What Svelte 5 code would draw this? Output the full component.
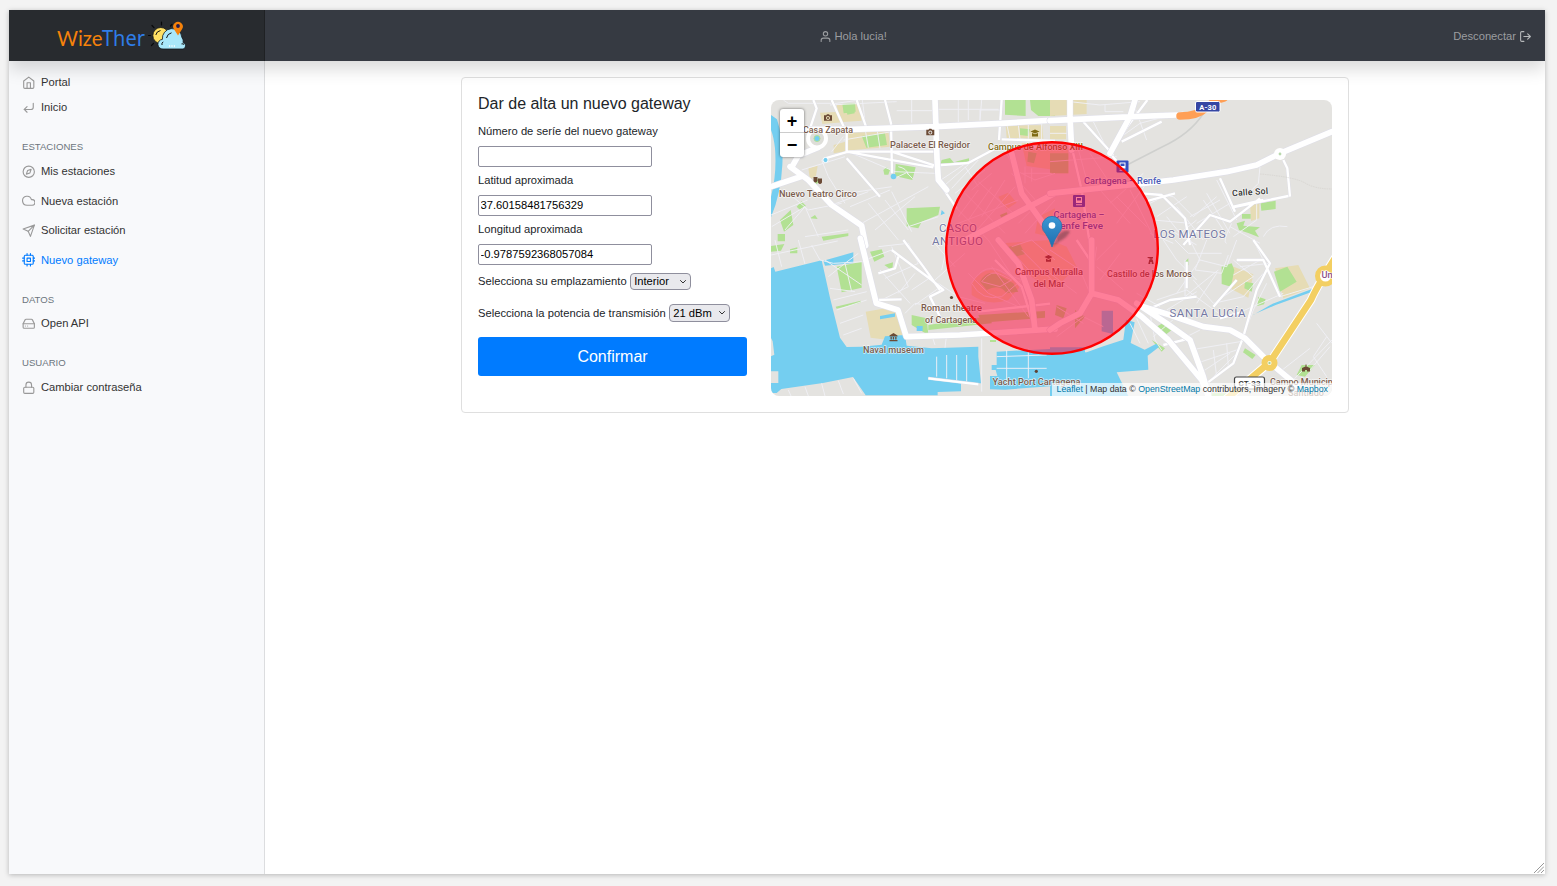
<script>
  const icons = {
    home: '<path d="M3 9l9-7 9 7v11a2 2 0 0 1-2 2H5a2 2 0 0 1-2-2z"/><path d="M9 22V12h6v10"/>',
    enter: '<path d="M9 10l-5 5 5 5"/><path d="M20 4v7a4 4 0 0 1-4 4H4"/>',
    compass: '<circle cx="12" cy="12" r="10"/><path d="M16.24 7.76l-2.12 6.36-6.36 2.12 2.12-6.36z"/>',
    cloud: '<path d="M18 10h-1.26A8 8 0 1 0 9 20h9a5 5 0 0 0 0-10z"/>',
    send: '<path d="M22 2L11 13"/><path d="M22 2l-7 20-4-9-9-4z"/>',
    cpu: '<rect x="4" y="4" width="16" height="16" rx="2"/><path d="M9 9h6v6H9zM9 1v3M15 1v3M9 20v3M15 20v3M20 9h3M20 14h3M1 9h3M1 14h3"/>',
    drive: '<path d="M22 12H2"/><path d="M5.45 5.11L2 12v6a2 2 0 0 0 2 2h16a2 2 0 0 0 2-2v-6l-3.45-6.89A2 2 0 0 0 16.76 4H7.24a2 2 0 0 0-1.79 1.11z"/><path d="M6 16h.01M10 16h.01"/>',
    lock: '<rect x="3" y="11" width="18" height="11" rx="2"/><path d="M7 11V7a5 5 0 0 1 10 0v4"/>',
    user: '<path d="M20 21v-2a4 4 0 0 0-4-4H8a4 4 0 0 0-4 4v2"/><circle cx="12" cy="7" r="4"/>',
    logout: '<path d="M9 21H5a2 2 0 0 1-2-2V5a2 2 0 0 1 2-2h4"/><path d="M16 17l5-5-5-5M21 12H9"/>'
  };

  const sections = [
    { items: [['home', 'Portal'], ['enter', 'Inicio']] },
    {
      title: 'ESTACIONES',
      items: [['compass', 'Mis estaciones'], ['cloud', 'Nueva estación'], ['send', 'Solicitar estación'], ['cpu', 'Nuevo gateway']]
    },
    { title: 'DATOS', items: [['drive', 'Open API']] },
    { title: 'USUARIO', items: [['lock', 'Cambiar contraseña']] }
  ];
  const active = 'Nuevo gateway';

  let serial = $state('');
  let lat = $state('37.60158481756329');
  let lon = $state('-0.9787592368057084');

  // The map is drawn as four tiles, each with its own origin and three units per pixel.
  const tiles = [
    {
      x: 765, y: 90,
      water: 'M18 75L36 88Q56 150 52 225Q48 310 18 382V320Q36 250 30 175Q26 140 18 120Z M530 360l10 10-13 6z',
      tan: 'M215 45l70-5 5 52-65 5z M165 68l62-3 5 32-60 5z M240 127l130-5 6 48-110 10-60 10v-25l35-10z M722 106h110l3 40H725z M130 235l28-8-5 30-18 12z M770 160h100v80l-85-12z M700 320l30-12 25 30-30 20z M820 380l50-25v90l-60-15z',
      park: 'M232 42l38-3 2 26-36 5z M290 138l70-8 6 35-62 8z M720 30h62v48l-62-4z M795 30h75v48h-50l-22-18z M392 222l60 10-10 38-52-12z M355 240l10-8 10 8-5 14h-12z M530 210l25-6 12 14-40 2z M570 215l42-10v14z M425 355l100-5-5 25-50 20-10 20-35-6z M45 390l32-30 8 45-28 20z M95 350l14-16 14 14-18 12z M135 385l15-10 8 12z M765 115l30 3-5 20-25-3z M170 440l80-10v8l-75 14z M38 432h22v22H38z M245 60l24-4v14l-22 4z M160 265l-14 14 9 4 12-14z M790 185l25 5-8 30-20-5z M705 375l20-8 10 20-20 8z',
      minor: 'M70 40H200 M70 40L55 30 M195 45l200-10 M300 95l-8-65 M285 30l-85 12 M440 30v68 M395 62h110 M580 30v68 M510 58h190 M610 30v60 M650 30l-5 60 M645 92V60h60 M725 100l10 48 M760 105l5 42 M790 105v45 M830 100v50 M300 115l10 58 M335 110l10 65 M235 150l145-25 M200 185l35-45 M250 185l140 60 120 5 M250 205l95 115 M240 200L110 240 M170 210l20 50 50 80 M180 320l200-30 M200 345l110-40 M255 350l120-50 M290 400l200-110 M330 420l120-100 M360 330l70 90 M310 340l90 110 M380 305l60 120 M430 410l90-30 M520 275l90-60 M540 285l80-70 M560 295l80-85 M570 310l90-70 M600 230l40 60 M620 300l60-50 M60 300l70 60 100-20 M18 375l110-45 M20 410l100-60 40 90 M120 350l-60 70 M120 440l130-20 M395 262l30-14 18 18 M400 230q25 5 30 24 M640 275l110 100 M600 310l120 120 M560 340l110 110 M580 400l180-70 M640 300l-60 80 M680 290l-70 100 M720 270l-70 110 M610 450l140-160 M740 250l80 90 M760 400l80-80 M870 330l-90 100 M720 180l30 60 60 30 60-20 M770 250h90 M780 230v50 M800 235v40',
      mid: 'M200 30l45 100v60 M145 30l10 25-20 60 M275 30l28 80 M360 30l18 70 3 150 M180 205l70-20h130l130 42 100-8 90-48h170 M245 185l145 27 115 20 M710 30l-8 120 M520 275l55 80 M710 148l160 5 M245 205l100 115 M380 185h130',
      major: 'M110 118h150l250-8 200-10 160-10 M510 30l6 175 4 65 25 30 M75 230l55 40 70 75 90 62 12 60 M80 232l20-35 60-25 M18 290l95-32 M740 190l30 120 100 140 M870 310l-270 140'
    },
    {
      x: 765, y: 240,
      water: 'M18 85l8-4 5 14 24-6 115-28 5 22 20 90 30 120 20 28 45-1 60-6 10-25 60-4 5 32 75 8 140-5v30l8 80-60-1v25l-70 2v10H302l-38-55-90 18-125 18-14 12H18v-30h22v-35H18v-45l10-5-5-40-5-10z M175 62l90-25v32l-85 8z M695 335l160-8v112l-135 10-45-1v-40h22l-5-18h-12v-15h15z M345 228l45-8v10l-45 8z M455 258h18v15h-18z',
      tan: 'M302 215l60-10 40 8 15 70-65 15-35-5z M345 235l55-10 15 60-55 12z M710 10l145-10v150l-70-50z M620 130q40-60 90-30l60 35-40 45q-60 20-110-15z',
      park: 'M215 80l75-15v78l-60 14z M315 35l35-7 8 22-30 15z M358 75l26-8-2 25z M18 18l40-6-10 20-30 3z M75 28l22-6v18H75z M440 225l45 10 5 50-50-30z M490 255l130-20 60-5v20l-190 20z M212 200l75-18v6l-72 18z M675 300h18v6h-18z M645 125q20-38 55-20l45 25 15 25-35 5q-20-30-60-10z M640 225l200-12v20l-190 15z M730 20l35-8 15 30-35 10z',
      minor: 'M30 0l20 80 M100 0l20 72 M18 45l200-42 M140 15l25 45 40 10 90-5 M180 60l110 75 M190 110l50-40 40-30 M195 145l75 10 M205 180l100-25 M215 210l90-30 M225 250l70-25 M235 285l55-20 M240 70l20 85 M300 60l80-30 M340 20l90-10 30 60-100 45 M380 20l50 120-80 40 M345 90l90 100 M400 160l50-60 M440 150l60-40 M450 195l70-50 M420 220l30-30 90 15 M520 130l60 40 80 20 M500 0l70 80 M550 0l-20 90 M600 40l-90 80 M610 100l60 60 90 40 M680 80l110 150 M620 130q40-70 100-30l50 20-60 50q-60 15-90-40 M650 125q30-40 60-20l30 15-35 20z M670 0l120 180 M740 20l60-20 70 60 M800 100l-90-100 M870 130l-100-100 M500 285l10 30 M545 283l-5 40 M265 415l25 45 M220 422l15 40 M170 430l10 38 M120 440l10 28 M70 450l8 18 M515 350v60 M545 345v70 M575 345v80 M605 345v80 M650 295v160 M725 330v100 M790 325v90 M695 385h150 M695 350l150-5',
      mid: 'M380 30l120 90 35 30-40 20 30 60 M330 180l80-2 M340 100l50-15 10-35 M415 0l60 80 50 70 M690 60l80 80 40 130 M640 215l215-24 M490 415l150 18',
      major: 'M286 -5l48 195 65 20 25 80 160-5 100-6 186-12 M700 0l60 70 40 110 10 90'
    },
    {
      x: 1050, y: 90,
      water: '',
      tan: 'M0 30h110v42L0 78z M0 108h48v40H0z M600 340l28-5v50l-25 8z M0 160l55 10v80H0z',
      park: 'M632 340l45-8v25l-43 5z M576 372h26v14h-26z M560 400l25-8-5 15 50 5-15 10 12 20-30-12-30-10z M0 190h55v60H0z',
      minor: 'M60 35l90 10 120-10 M130 95l45 90 M250 40l40 110 M200 150l70-50 130-35 M165 45v20h55 M0 130h50 M0 215l200-15 M80 160l30 110 M120 190l60 90 M150 300l90 100 M180 340l100-90 M200 400l90-120 M240 300l80 160 M200 320l90 90 M290 310l80 10 60 60 70-60 M300 340l60-30 M320 380l90-60 M380 350l80 100 M420 380l90-50 M440 400l100-60 M470 310l70 120 M500 270l60 120 M460 330l60 90 M550 355l80-25 90-12 M630 230l-5 50-30 30 M545 400q-30 60-15 60 M620 340v50l-70 50 M640 440q20-40 72-30 M540 410l90 50 M300 430l70 30 M360 420l80 45 M310 390l110 10 M350 380l40 50 50-40',
      mid: 'M55 30l10 140 30 130 25 165 M100 95l90 100 M292 30l-60 80-50 80 M215 155l120-60 M180 190l60 70 M275 310l60 5 70 70 15 80 M285 335l90-25 M510 265l45 100 M550 350l90-20 M715 318l-170 35 M700 210l12 25 8 85 M400 465l80-90 60 20 90-70',
      major: 'M0 92l250-12 130-5 M255 30l-15 50-60 110 M0 310l280-30 90-10 160-25 90-20 70-35 156-65 M60 75v-45 M60 80l5 100'
    },
    {
      x: 1050, y: 240,
      water: 'M0 327l110 10 50-18 60-20 8-60 26 8-12 62 42 20 35-18 8 10-34 26 2 42-95 8 35 71H0z M155 212h34v70l-34-8z M0 322h105v16H0z M608 226l60-35 124-46-5 10-110 40-65 28z',
      tan: 'M545 78l65 25-15 70-50-25z M675 85l70-10 35 70-80 30z M560 440l40-12-15 25-40 20-20-3z M0 0l50 20 30 60-60 60-20 5z',
      park: 'M515 80l30-10 8 20-10 50-28-8z M672 95l40-15 28 45-50 30z M585 125l25 5-5 25-22-10z M405 65l10-10v20l-10 15z M320 260l25-15 20 25-28 22-18-10z M585 325l32 20-10 12-28-20z M625 170l22 8-5 15-20 5z M755 375l40 0-30 35-25-5z M480 460h60v8h-60z M305 300l40 25-10 10z M20 195l30 10-10 30-25-10z M75 210l30 20-30 35z',
      minor: 'M340 0l40 60 60 60 M375 0l40 40 100 0 M420 0l30 60-70 100 M450 60l80 20 30-80 M470 0l-35 90 80 10 20-55 M405 60v110l100-80 M500 100l-60 90 M320 180l90-30 110 80 M350 210l90-55 M430 120l60 70 90-20 60-70 M610 0l80 160 M570 80l90-10 M690 170l100-30 M550 60l60 50-90 60 M640 55l-90 50 M580 290l30-80 40-80 M240 250l30 60 M260 235l35 75 M300 220l15 80 20 30 M260 160l70 40 M380 230l-70 60 M450 270l-60 30 M420 330l150-25 M440 370l120-40 M450 400l90-60 M470 430l90-90 M490 330l10 80 M530 310l5 70 M690 395l90-70 M720 430l126-130 M790 350l40 60 M840 320l-60 70 M800 250l46 60 M830 290l-40 60 M0 30l90 60 30 70 M140 20l-20 140 M140 80l80 70 M0 100l80 60 M20 200l80 50 M200 0l-60 60 M150 120l60-80 M20 290l80-60 60 30 M540 230l160-70',
      mid: 'M300 205l60-25 80-10 M580 290l40-140 40-80-50-70 M490 200l70-80 M580 290l-30 80-80 60 M420 300l50 130 M410 65v80 M510 235l70-20 M340 315l80-20 M560 60h80l50 110 M80 0l40 60 10 100',
      major: 'M125 160l80 20 70 50 80 70 100 120 20 48 M260 190l90 60 70 50 40 110 15 55 M280 200l80 25 100 35 80 10 45 25 75 75 M680 385l60 50 M125 160L90 220 30 250 0 270 M125 160V0'
    }
  ];

  const labels = [
    ['Casa Zapata', 828, 132.5, 50, 'poi'],
    ['Palacete El Regidor', 930, 148, 80, 'poi'],
    ['Campus de Alfonso XIII', 1035.5, 149.5, 95, 'school'],
    ['Nuevo Teatro Circo', 818, 196.5, 78, 'poi'],
    ['CASCO', 958, 231.8, 38, 'area'],
    ['ANTIGUO', 957.5, 244.8, 51, 'area'],
    ['Cartagena – Renfe', 1122.5, 183.8, 77, 'rail'],
    ['Cartagena –', 1079, 217.5, 51, 'rail'],
    ['Renfe Feve', 1078.5, 229.2, 49, 'rail'],
    ['Campus Muralla', 1049, 275, 68, 'poi'],
    ['del Mar', 1049, 286.5, 31, 'poi'],
    ['Castillo de los Moros', 1149.5, 276.5, 85, 'poi'],
    ['LOS MATEOS', 1189.5, 238.3, 72, 'area'],
    ['SANTA LUCÍA', 1207.5, 317.3, 76, 'area'],
    ['Roman theatre', 951.5, 311, 61, 'poi'],
    ['of Cartagena', 951, 322.7, 52, 'poi'],
    ['Naval museum', 893.5, 353.2, 61, 'poi'],
    ['Yacht Port Cartagena', 1036.5, 384.7, 88, 'poi'],
    ['Univ', 1330.5, 277.5, 18, 'hosp'],
    ['Campo Municipal', 1305, 384.7, 70, 'poi'],
    ['Santiago', 1306, 396, 36, 'poi']
  ];
  const dots = [[951.5, 297.5], [1036.3, 371.3]];
</script>

{#snippet icon(name)}
  <svg class="icon" viewBox="0 0 24 24" aria-hidden="true">{@html icons[name]}</svg>
{/snippet}

{#snippet camera(x, y)}
  <path transform="translate({x} {y})" fill="#6b4a35" fill-rule="evenodd" d="M-4-2.3h2.2L-1-3.3h2l.8 1H4v5.6h-8zM0-1.5a2 2 0 1 0 .01 0zM0-.5a1 1 0 1 1-.01 0z" />
{/snippet}

<div class="window">
  <header>
    <div class="brand">
      <svg width="132" height="32" viewBox="56 20 132 32" role="img" aria-label="WizeTher">
        <text x="57" y="46" class="wize" textLength="45.5" lengthAdjust="spacingAndGlyphs">Wize</text>
        <text x="102" y="46" class="ther" textLength="43" lengthAdjust="spacingAndGlyphs">Ther</text>
        <g stroke="#08090a" stroke-width="1.2" stroke-linecap="round">
          <path d="M161.5 22v3M152 25.5l2 2.2M148.5 35.500h2M151.500 45.500l2-2.200M170.500 26l1.500-1.700" />
        </g>
        <circle cx="160.800" cy="35.500" r="8" fill="#ffe063" stroke="#111" stroke-width=".8" />
        <path d="M155.800 35q.7-3.700 4.700-4.500" fill="none" stroke="#111" />
        <path d="M163 49a4.800 4.800 0 0 1-.6-9.600 9.500 9.500 0 0 1 19.500-2q2 2.500 1.200 5.200a3.300 3.300 0 0 1 0 6.400z" fill="#a9e7fa" stroke="#101820" stroke-width=".8" />
        <path d="M166.500 38q.8-4.200 5-5.200M162 45q-.6-2 1.200-3.200M184 44.500q-.8-1-2.500-.6" fill="none" stroke="#111" />
        <path d="M169 46h1.200m1.200 0h1.200m1.200 0h1.200" stroke="#fff" stroke-width="1.300" />
        <path d="M178 35.500l-4-6.200a4.800 4.800 0 1 1 8 0z" fill="#f5820b" />
        <circle cx="178" cy="26" r="1.900" fill="#241a4d" />
      </svg>
    </div>
    <div class="greeting">{@render icon('user')}<span>Hola lucia!</span></div>
    <div class="logout"><span>Desconectar</span>{@render icon('logout')}</div>
  </header>

  <div class="body">
    <nav>
      {#each sections as section}
        {#if section.title}<h6>{section.title}</h6>{/if}
        <ul class:top={!section.title}>
          {#each section.items as [glyph, label]}
            <li class:active={label === active}>{@render icon(glyph)}<span>{label}</span></li>
          {/each}
        </ul>
      {/each}
    </nav>

    <main>
      <section class="card">
        <form>
          <h1>Dar de alta un nuevo gateway</h1>
          <label for="serial">Número de seríe del nuevo gateway</label>
          <input id="serial" bind:value={serial} />
          <label for="lat">Latitud aproximada</label>
          <input id="lat" bind:value={lat} />
          <label for="lon">Longitud aproximada</label>
          <input id="lon" bind:value={lon} />
          <div class="row first">
            <span>Selecciona su emplazamiento</span>
            <div class="select">
              <select aria-label="Emplazamiento"><option>Interior</option></select>
              <svg viewBox="0 0 8 6"><path d="M1.2 1.2L4 4l2.8-2.8" /></svg>
            </div>
          </div>
          <div class="row second">
            <span>Selecciona la potencia de transmisión</span>
            <div class="select">
              <select aria-label="Potencia"><option>21 dBm</option></select>
              <svg viewBox="0 0 8 6"><path d="M1.2 1.2L4 4l2.8-2.8" /></svg>
            </div>
          </div>
          <button type="button">Confirmar</button>
        </form>

        <div class="map">
          <svg class="canvas" viewBox="771 100 561 296">
            <rect x="771" y="100" width="561" height="296" fill="#e4e3e0" />
            {#each tiles as t}
              <g transform="translate({t.x} {t.y}) scale(.33333)">
                <path d={t.tan} fill="#e6dcb5" />
                <path d={t.park} fill="#b2e193" />
                <path d={t.water} fill="#74cef0" />
              </g>
            {/each}
            {#each tiles as t}
              <g transform="translate({t.x} {t.y}) scale(.33333)" fill="none" stroke-linejoin="round">
                <path d={t.minor} stroke="#f0f0f5" stroke-width="2.800" />
                <path d={t.mid} stroke="#dcdce6" stroke-width="9" />
                <path d={t.mid} stroke="#fff" stroke-width="7" />
              </g>
            {/each}
            {#each tiles as t}
              <g transform="translate({t.x} {t.y}) scale(.33333)" fill="none" stroke-linejoin="round" stroke-linecap="round">
                <path d={t.major} stroke="#dedee8" stroke-width="20" />
                <path d={t.major} stroke="#fff" stroke-width="17" />
              </g>
            {/each}

            <circle cx="817" cy="138.500" r="9" fill="#deded9" stroke="#fff" stroke-width="4" />
            <circle cx="817" cy="138.500" r="3" fill="#74cef0" stroke="#b2e193" />
            <circle cx="825.500" cy="160" r="2.600" fill="#74cef0" stroke="#fff" />
            <circle cx="893.500" cy="176.500" r="2.800" fill="#74cef0" />
            <circle cx="1280" cy="154" r="6" fill="#fff" />
            <circle cx="1280" cy="154" r="1.400" fill="#b9d9ad" />
            <path d="M1127 165L1162 147Q1190 134 1203 114" fill="none" stroke="#cfd0ce" stroke-width="1.500" />
            <path d="M1260 174q35 3 45 9t27 6" fill="none" stroke="#d5d3cf" stroke-width=".7" stroke-dasharray="1.500 .8" />
            <path d="M1180 116Q1198 116 1206 108T1224 98" fill="none" stroke="#ff9f55" stroke-width="7.500" stroke-linecap="round" />
            <g fill="none" stroke-linecap="round">
              <path d="M1224 401L1270 362L1311 300Q1316 288 1335 258" stroke="#fff" stroke-width="8.500" />
              <path d="M1224 401L1270 362L1311 300Q1316 288 1335 258" stroke="#f3cf62" stroke-width="6.500" />
            </g>
            <circle cx="1325.500" cy="276" r="8" fill="#fff" stroke="#f3cf62" stroke-width="5" />
            <circle cx="1269.500" cy="363" r="5" fill="#fff" stroke="#f3cf62" stroke-width="6" />
            <circle cx="1269.500" cy="363" r="1.200" fill="#a7cf91" />

            <rect x="1195.500" y="101.500" width="24.500" height="10.500" rx="1.500" fill="#3546a3" stroke="#fff" />
            <text x="1207.800" y="109.500" class="shield" textLength="17">A-30</text>
            <rect x="1234.500" y="377" width="30" height="12" rx="2" fill="#fff" stroke="#444" stroke-width="1.200" />
            <text x="1249.500" y="385.500" class="shield dark" textLength="22">CT-33</text>

            {@render camera(828, 117.5)}
            {@render camera(930.3, 132)}
            <g fill="#6b4a35">
              <path d="M813.5 177h4v4q-2 3-4 0zM818 178.5h4v4q-2 3-4 0z" />
              <path d="M889.5 335.5l4-2.5 4 2.5v1h-8zM890.5 337h1.3v2.5h-1.3zM892.8 337h1.3v2.5h-1.3zM895.2 337h1.3v2.5h-1.3zM889.5 340h8v1.3h-8z" />
              <path d="M1147 257h6v1.500h-1.300v1h1l1 4.500h-2v-2h-1.400v2h-2l1-4.500h1v-1h-1.300z" />
              <path d="M1044.500 257l4-2 4 2-4 2zM1046 258.800l2.500 1.200 2.500-1.200v3h-5z" />
              <path d="M1302 368l3.500-1.500v-2h1v2l3.500 1.500v3.500h-3v-1.500h-2v1.500h-3z" />
            </g>
            <path fill="#7f6b14" d="M1030.500 131.500l4.500-2 4.500 2-4.500 2zM1032 133l3 1.300 3-1.300v3.500h-6z" />
            {#each [[1116.5, 160.5], [1073, 195]] as [x, y]}
              <g transform="translate({x} {y})">
                <rect width="12" height="12" rx="1" fill="#3450c0" />
                <path fill="#fff" fill-rule="evenodd" d="M3 2h6v6H3zm1 1v2.500h4V3zM3 9.200h6v1H3z" />
              </g>
            {/each}
            {#each dots as [x, y]}<circle cx={x} cy={y} r="1.600" fill="#5f4334" />{/each}

            {#each labels as [text, x, y, w, kind]}
              <text {x} {y} class={kind} textLength={w} lengthAdjust={kind === 'area' ? 'spacing' : 'spacingAndGlyphs'}>{text}</text>
            {/each}
            <text x="1250" y="195" class="street" textLength="36" transform="rotate(-4 1250 192)">Calle Sol</text>

            <circle cx="1052" cy="248" r="105.800" fill="#ff0033" fill-opacity=".5" stroke="#f00" stroke-width="2.400" />

            <defs>
              <linearGradient id="pin" x1="0" y1="0" x2="0" y2="1">
                <stop offset="0" stop-color="#3a97d3" />
                <stop offset="1" stop-color="#1f6fb0" />
              </linearGradient>
              <filter id="soft"><feGaussianBlur stdDeviation="1.200" /></filter>
            </defs>
            <path d="M1052 247l6-12q6-6 12-4-2 6-10 10z" fill="#222" opacity=".35" filter="url(#soft)" />
            <path d="M1052 247.500q-2-7-6.500-13.500a9.800 9.800 0 1 1 13 0q-4.500 6.500-6.500 13.500z" transform="translate(0 -.5)" fill="url(#pin)" stroke="#2a73ad" stroke-width=".8" />
            <circle cx="1052" cy="225.500" r="3.300" fill="#fff" />
          </svg>
          <div class="zoom"><span>+</span><span>−</span></div>
          <div class="credit"><a>Leaflet</a> | Map data © <a>OpenStreetMap</a> contributors, Imagery © <a>Mapbox</a></div>
        </div>
      </section>
    </main>
  </div>
  <svg class="grip" viewBox="0 0 10 10"><path d="M0 10L10 0M3.500 10L10 3.500M7 10l3-3" /></svg>
</div>

<style>
  :global(body) { background: #f3f3f3; }
  :global(#app) { display: flow-root; height: 886px; overflow: hidden; }
  :global(*) { box-sizing: border-box; }
  .window {
    position: relative;
    display: flex;
    flex-direction: column;
    width: 1536px;
    height: 864px;
    margin: 10px 0 0 9px;
    background: #fff;
    box-shadow: 0 1px 5px rgba(0, 0, 0, .25);
    font-family: "Liberation Sans", Arial, sans-serif;
    font-size: 11.2px;
    color: #212529;
  }
  header {
    position: relative;
    z-index: 2;
    display: flex;
    align-items: center;
    flex: 0 0 51px;
    background: #363a42;
    box-shadow: 0 8px 16px rgba(0, 0, 0, .15);
    clip-path: inset(0 0 -30px 0);
    color: #9b9da0;
  }
  .brand {
    display: flex;
    align-items: center;
    width: 256px;
    height: 51px;
    padding-left: 47px;
    background: #282b2f;
    border-right: 1px solid #1f2124;
  }
  .wize { font: 400 21.5px Lato, sans-serif; fill: #f5820b; }
  .ther { font: 400 21.5px "Noto Sans", sans-serif; fill: #2f7de8; }
  .greeting { display: flex; align-items: center; gap: 3px; margin-left: 553.5px; padding-top: 1px; }
  .logout { display: flex; align-items: center; gap: 3px; margin-left: auto; margin-right: 13px; padding-top: 1px; }
  .logout .icon { stroke: #b6b8ba; }
  .icon {
    flex: none;
    width: 13px;
    height: 13px;
    fill: none;
    stroke: currentColor;
    stroke-width: 2;
    stroke-linecap: round;
    stroke-linejoin: round;
  }
  .body { display: flex; flex: 1; }
  nav {
    flex: 0 0 256px;
    padding: 11px 0 0 12.5px;
    background: #f8f9fb;
    border-right: 1px solid #dcdddf;
    color: #333;
  }
  ul { display: flex; flex-direction: column; gap: 9.6px; margin: 0; padding: 0; list-style: none; }
  ul.top { gap: 5px; }
  li { display: flex; align-items: center; gap: 6px; height: 20px; }
  li:nth-child(even) span { padding-top: 1px; }
  .top li span { padding-top: 0; }
  li .icon { width: 13.5px; height: 13.5px; margin-top: 1px; color: #999; }
  .top .icon { margin-top: 2px; }
  li.active, li.active .icon { color: #007bff; }
  h6 {
    height: 14px;
    margin: 23px 0 6.8px .5px;
    font-size: 9.6px;
    font-weight: 400;
    line-height: 14px;
    color: #6c757d;
  }
  main { flex: 1; padding: 16px 0 0 196px; }
  .card {
    display: flex;
    gap: 24px;
    width: 888px;
    height: 336px;
    padding: 0 16px;
    border: 1px solid #dfdfdf;
    border-radius: 4px;
  }
  form { display: flex; flex-direction: column; width: 269px; padding-top: 17px; }
  h1 { height: 18px; margin: 0 0 10px; font-size: 16px; font-weight: 400; line-height: 18px; }
  label { height: 16px; margin-bottom: 7px; line-height: 16px; }
  input {
    width: 174px;
    height: 21px;
    margin: 0 0 5px;
    padding: 0 2px 1px 1.5px;
    border: 1px solid #8f8f9d;
    border-radius: 2px;
    background: #fff;
    color: #000;
    font: inherit;
  }
  .row { display: flex; align-items: center; gap: 3px; height: 17px; margin-top: 3px; }
  .row.first > span { padding-bottom: 1px; }
  .row.first select { padding-bottom: 1px; }
  .row.second { height: 18px; margin-top: 14px; }
  .select { position: relative; width: 61px; height: 100%; }
  select {
    display: block;
    width: 100%;
    height: 100%;
    padding: 0 3.5px;
    appearance: none;
    border: 1px solid #8f8f9d;
    border-radius: 4px;
    background: #e9e9ed;
    color: #000;
    font: inherit;
  }
  .select svg { position: absolute; right: 4px; top: 6px; width: 8px; height: 6px; fill: none; stroke: #333; }
  button {
    height: 39px;
    margin-top: 15px;
    border: 0;
    border-radius: 3px;
    background: #007bff;
    color: #fff;
    font: 16px "Liberation Sans", Arial, sans-serif;
  }
  .map { position: relative; width: 561px; height: 296px; margin-top: 22px; overflow: hidden; border-radius: 8px; }
  .canvas { display: block; width: 561px; height: 296px; }
  .canvas text {
    font-family: Roboto, sans-serif;
    font-size: 9.6px;
    font-weight: 500;
    text-anchor: middle;
    paint-order: stroke;
    stroke: rgba(255, 255, 255, .7);
    stroke-width: 1.4px;
    stroke-linejoin: round;
  }
  .canvas .poi { fill: #7b5c4c; }
  .canvas .school { fill: #7f6b14; }
  .canvas .rail { fill: #4a5cb8; }
  .canvas .hosp { fill: #8d5088; }
  .canvas .area { fill: #7478a3; font-size: 11.5px; font-weight: 400; }
  .canvas .street { fill: #333; font-size: 8.8px; }
  .canvas .shield { fill: #fff; stroke: none; font-size: 7.5px; font-weight: 700; }
  .canvas .shield.dark { fill: #333; font-size: 8px; }
  .zoom {
    position: absolute;
    left: 9px;
    top: 9px;
    width: 24px;
    border-radius: 3px;
    background: #fff;
    box-shadow: 0 0 3px rgba(0, 0, 0, .55);
    color: #000;
    font: 700 18px/24px "Liberation Sans", Arial, sans-serif;
    text-align: center;
  }
  .zoom span { display: block; height: 24px; }
  .zoom span:first-child { height: 23px; }
  .zoom span + span { height: 25px; border-top: 1px solid #ccc; line-height: 25px; }
  .credit {
    position: absolute;
    right: 0;
    bottom: 0;
    height: 13px;
    padding: 0 4px;
    background: rgba(255, 255, 255, .7);
    color: #333;
    font-size: 8.8px;
    line-height: 13px;
    white-space: nowrap;
  }
  .credit a { color: #0078a8; }
  .grip { position: absolute; right: 1px; bottom: 1px; width: 10px; height: 10px; fill: none; stroke: #999; }
</style>
